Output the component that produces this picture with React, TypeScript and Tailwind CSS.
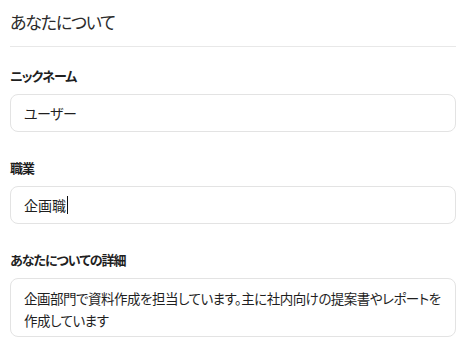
const FONT = "font-['Noto_Sans_CJK_JP','Noto_Sans',sans-serif] [font-feature-settings:'palt']";

function Field({ label, children }: { label: string; children: React.ReactNode }) {
  return (
    <div className="flex flex-col gap-[8px]">
      <label className="text-[13px] font-bold leading-[20px] tracking-[-1px] text-[#1f1f1f]">{label}</label>
      {children}
    </div>
  );
}

export default function App() {
  return (
    <div className={`${FONT} min-h-screen bg-white pl-[10px] pr-[8px]`}>
      <div className="w-[446px]">
        <h2 className="pt-[9px] pb-[11px] text-[17px] leading-[26px] tracking-[-1.2px] text-[#2b2b2b]">あなたについて</h2>
        <div className="border-t border-[#e8e8e8]" />

        <div className="mt-[19px] flex flex-col gap-[26px]">
          <Field label="ニックネーム">
            <div className="flex h-[38px] items-center rounded-[8px] border border-[#e3e3e3] px-[13px] text-[14px] tracking-[-0.5px] text-[#1f1f1f]">
              ユーザー
            </div>
          </Field>

          <Field label="職業">
            <div className="flex h-[38px] items-center rounded-[8px] border border-[#e3e3e3] px-[13px] text-[14px] text-[#1f1f1f]">
              企画職
              <span className="ml-px inline-block h-[18px] w-px bg-[#111]" />
            </div>
          </Field>

          <Field label="あなたについての詳細">
            <div className="rounded-[8px] border border-[#e3e3e3] px-[13px] pt-[8px] pb-[5px] text-[13.5px] leading-[22px] tracking-[-0.5px] text-[#1f1f1f]">
              <span className="whitespace-nowrap">企画部門で資料作成を担当しています。主に社内向けの提案書やレポートを</span>
              <br />
              作成しています
            </div>
          </Field>
        </div>
      </div>
    </div>
  );
}
